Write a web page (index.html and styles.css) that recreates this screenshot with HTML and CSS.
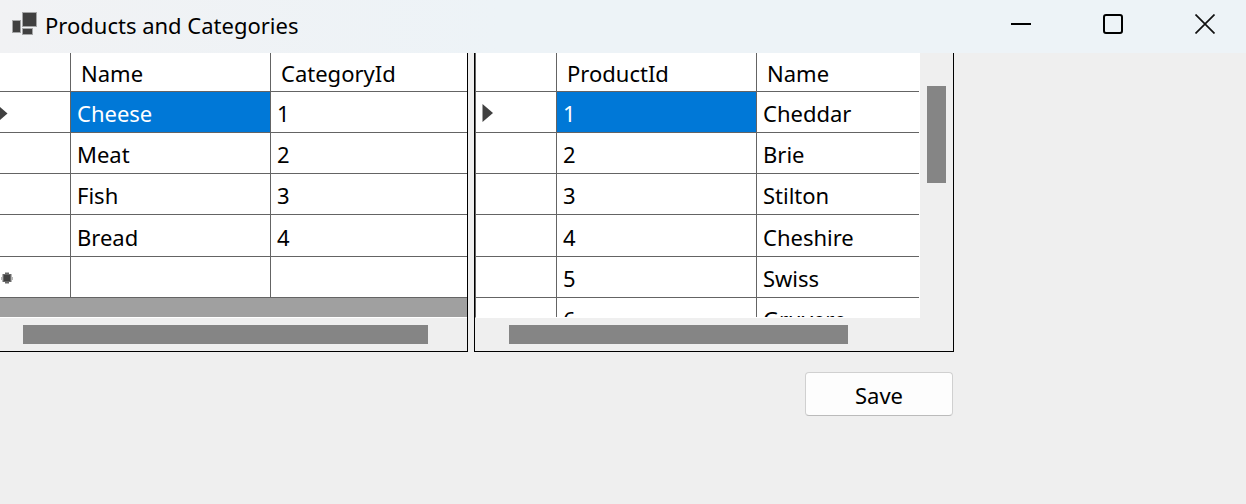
FILE: index.html
```html
<!DOCTYPE html>
<html lang="en">
<head>
<meta charset="utf-8">
<title>Products and Categories</title>
<link rel="stylesheet" href="styles.css">
</head>
<body>
<header class="titlebar">
  <svg class="app-icon" width="26" height="24" viewBox="0 0 26 24" aria-hidden="true">
    <g fill="#404040" stroke="#a4a5a6" stroke-width="1">
      <rect x="0.5" y="8.5" width="8" height="12"/>
      <rect x="10.500" y="0.500" width="14" height="14"/>
      <rect x="10.500" y="16.500" width="10" height="6"/>
    </g>
  </svg>
  <h1 class="title">Products and Categories</h1>
  <div class="window-controls">
    <button class="window-button" type="button" aria-label="Minimize">
      <svg width="20" height="20" viewBox="0 0 20 20"><path d="M0 10H20" stroke="#000" stroke-width="2"/></svg>
    </button>
    <button class="window-button" type="button" aria-label="Maximize">
      <svg width="20" height="20" viewBox="0 0 20 20"><rect x="1" y="1" width="18" height="18" rx="2" fill="none" stroke="#000" stroke-width="2"/></svg>
    </button>
    <button class="window-button" type="button" aria-label="Close">
      <svg width="20" height="20" viewBox="0 0 20 20"><path d="M0.500 0.500L19.500 19.500M19.500 0.500L0.500 19.500" stroke="#111" stroke-width="1.700"/></svg>
    </button>
  </div>
</header>
<main class="form">
  <section class="grid-view categories" aria-label="Categories">
    <div class="viewport">
      <table class="data">
        <colgroup><col class="col-marker"><col class="col-value"><col></colgroup>
        <thead><tr><th></th><th scope="col">Name</th><th scope="col">CategoryId</th></tr></thead>
        <tbody>
          <tr><td class="marker"><svg width="8" height="20" viewBox="0 0 8 20"><path d="M0 4L7.500 10.500L0 17Z" fill="#404040"/></svg></td><td class="selected">Cheese</td><td>1</td></tr>
          <tr><td></td><td>Meat</td><td>2</td></tr>
          <tr><td></td><td>Fish</td><td>3</td></tr>
          <tr><td></td><td>Bread</td><td>4</td></tr>
          <tr><td class="marker"><svg width="14" height="14" viewBox="0 0 14 14"><path d="M5 1h4v2h3v3h1v3h-1v2h-3v2H5v-2H2V9H1V6h1V3h3z" fill="#b5b5b5"/><path d="M5 2h4v1h2v8H9v1H5v-1H3V3h2z" fill="#686868"/><rect x="4" y="4" width="6" height="6" fill="#404040"/></svg></td><td></td><td></td></tr>
        </tbody>
      </table>
    </div>
    <div class="scroll-x"><div class="thumb"></div></div>
  </section>
  <section class="grid-view products" aria-label="Products">
    <div class="viewport">
      <table class="data">
        <colgroup><col class="col-marker"><col class="col-value"><col></colgroup>
        <thead><tr><th></th><th scope="col">ProductId</th><th scope="col">Name</th></tr></thead>
        <tbody>
          <tr><td class="marker"><svg width="20" height="20" viewBox="0 0 20 20"><path d="M6.500 1L17 10L6.500 19Z" fill="#404040"/></svg></td><td class="selected">1</td><td>Cheddar</td></tr>
          <tr><td></td><td>2</td><td>Brie</td></tr>
          <tr><td></td><td>3</td><td>Stilton</td></tr>
          <tr><td></td><td>4</td><td>Cheshire</td></tr>
          <tr><td></td><td>5</td><td>Swiss</td></tr>
          <tr><td></td><td>6</td><td>Gruyere</td></tr>
        </tbody>
      </table>
    </div>
    <div class="scroll-y"><div class="thumb"></div></div>
    <div class="scroll-x"><div class="thumb"></div></div>
  </section>
  <button class="save" type="button">Save</button>
</main>
</body>
</html>
```
FILE: styles.css
```css
* {
  box-sizing: border-box;
}

body {
  margin: 0;
  min-height: 100vh;
  background: #efefef;
  color: #000;
  font-family: "Noto Sans", "Open Sans", sans-serif;
  font-size: 22px;
  line-height: 30px;
}

.titlebar {
  display: flex;
  align-items: center;
  height: 53px;
  padding: 0 5px 6px 12px;
  background: linear-gradient(90deg, #f1f2f4, #edf3f7 40%);
}

.app-icon {
  margin-right: 7px;
}

.title {
  flex: 1;
  margin: 0;
  padding-top: 2px;
  font-size: 22px;
  font-weight: 400;
}

.window-controls {
  display: flex;
  gap: 20px;
}

.window-button {
  display: grid;
  place-items: center;
  width: 72px;
  height: 46px;
  padding: 0;
  border: 0;
  background: none;
}

.form {
  display: grid;
  grid-template-columns: minmax(0, 468px) minmax(0, 480px);
  column-gap: 6px;
  row-gap: 20px;
}

.grid-view {
  display: grid;
  grid-template-rows: 265px 33px;
  border: solid #000;
  border-width: 0 1px 1px 0;
}

.products {
  grid-template-columns: minmax(0, 1fr) 33px;
  border-left-width: 1px;
}

.viewport {
  overflow: hidden;
  background: #a0a0a0;
  border-bottom: 1px solid #fff;
}

.products .viewport {
  border-left: 1px solid #646464;
  border-right: 1px solid #fff;
}

.data {
  width: 100%;
  table-layout: fixed;
  border-spacing: 0;
  background: #fff;
}

.categories .col-marker {
  width: 71px;
}

.products .col-marker {
  width: 81px;
}

.col-value {
  width: 200px;
}

th,
td {
  height: 41px;
  padding: 2px 6px 0;
  border: solid #646464;
  border-width: 0 1px 1px 0;
  font-weight: 400;
  text-align: left;
  white-space: nowrap;
}

th {
  height: 39px;
  padding: 2px 10px 0;
}

th:last-child,
td:last-child {
  border-right: 0;
}

tbody tr:nth-child(4) td {
  height: 42px;
}

.marker {
  padding: 2px 0 0;
}

.marker svg {
  display: block;
}

.selected {
  background: #0078d7;
  color: #fff;
}

.scroll-x {
  padding: 7px 39px 7px 23px;
}

.products .scroll-x {
  padding: 7px 105px 7px 34px;
  grid-column: 1 / -1;
}

.scroll-y {
  padding: 33px 7px 135px;
}

.thumb {
  height: 100%;
  background: #858585;
}

.save {
  grid-column: 2;
  justify-self: end;
  width: 148px;
  height: 44px;
  margin-right: 1px;
  padding: 2px 0 0;
  border: 1px solid #d0d0d0;
  border-bottom-color: #bbb;
  border-radius: 4px;
  background: #fdfdfd;
  color: #000;
  font: inherit;
}
```
